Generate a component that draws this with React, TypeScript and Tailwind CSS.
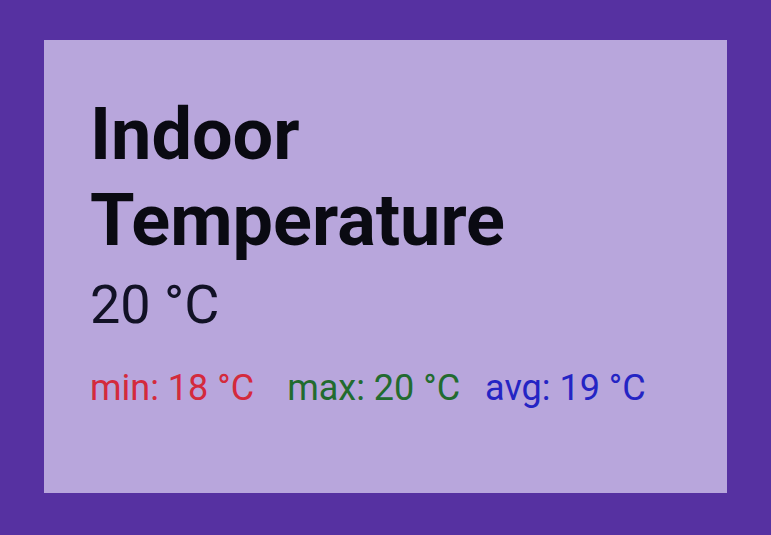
import React from 'react';

const App: React.FC = () => {
    return (
        <div className="w-[771px] h-[535px] bg-[#5631a1] flex p-[40px_44px_42px_44px]" style={{ fontFamily: 'Roboto, sans-serif' }}>
            <div className="flex-1 bg-[#b8a6dc] pl-[46px] pt-[52px] flex flex-col">
                <h1 className="text-[72px] leading-[86px] font-bold text-[#0a0a12]">
                    Indoor
                    <br />
                    Temperature
                </h1>
                <div className="text-[54px] leading-[64px] text-[#121226] mt-[9px]">20 °C</div>
                <div className="flex text-[36px] leading-[44px] mt-[29px]">
                    <span className="text-[#d42a3c]">min: 18 °C</span>
                    <span className="text-[#226b2f] ml-[33px]">max: 20 °C</span>
                    <span className="text-[#2424c4] ml-[25px]">avg: 19 °C</span>
                </div>
            </div>
        </div>
    );
};

export default App;
